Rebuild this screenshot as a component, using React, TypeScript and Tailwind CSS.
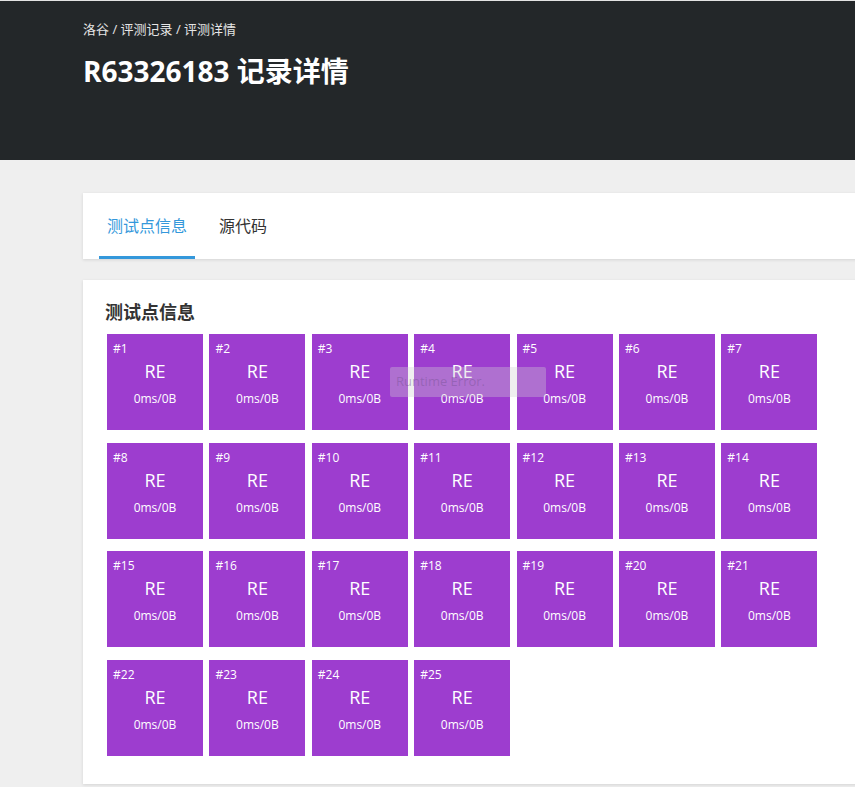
import React from "react";

const FONT = { fontFamily: '"Open Sans", "Noto Sans CJK SC", sans-serif' };

export default function App() {
  const tiles = Array.from({ length: 25 }, (_, i) => i + 1);
  return (
    <div className="w-[855px] h-[787px] overflow-hidden bg-[#efefef]" style={FONT}>
      <div className="h-px bg-[#e3e3e3]" />
      <header className="h-[159px] bg-[#232729] pl-[83px]">
        <div className="pt-[19px] text-[13px] leading-[18px] text-[#e6e6e6]">
          洛谷 / 评测记录 / 评测详情
        </div>
        <h1 className="mt-[19px] text-[28px] leading-[28px] font-bold text-white">
          R63326183 记录详情
        </h1>
      </header>

      <div className="ml-[83px] w-[900px] pt-[33px]">
        <div className="h-[66px] bg-white shadow-[0_1px_3px_rgba(26,26,26,0.12)] flex items-stretch pl-[16px]">
          <div className="relative px-[8px] flex items-center text-[16px] text-[#3498db]">
            <span className="-mt-[1px]">测试点信息</span>
            <div className="absolute left-0 right-0 bottom-0 h-[3px] bg-[#3498db]" />
          </div>
          <div className="ml-[16px] px-[8px] flex items-center text-[16px] text-[#333]">
            <span className="-mt-[1px]">源代码</span>
          </div>
        </div>

        <div className="relative mt-[21px] bg-white shadow-[0_1px_3px_rgba(26,26,26,0.12)] pl-[22px] pt-[20px] pb-[28px]">
          <div className="text-[18px] leading-[24px] font-bold text-[#333]">测试点信息</div>
          <div className="mt-[10px] ml-[2px] w-[760px] flex flex-wrap gap-x-[6.4px] gap-y-[12.67px]">
            {tiles.map((n) => (
              <div key={n} className="relative w-[96px] h-[96px] bg-[#9d3dcf] text-white">
                <div className="absolute left-[6px] top-[6px] text-[12px] leading-[18px]">#{n}</div>
                <div className="absolute left-0 right-0 top-[25px] text-center text-[18px] leading-[24px]">RE</div>
                <div className="absolute left-0 right-0 top-[56px] text-center text-[12px] leading-[18px]">0ms/0B</div>
              </div>
            ))}
          </div>
          <div className="absolute left-[307px] top-[87px] w-[156px] h-[30px] bg-[rgba(210,210,210,0.35)] rounded-[2px] flex items-center pl-[6px] text-[13px] text-[rgba(120,80,150,0.45)]">
            Runtime Error.
          </div>
        </div>
      </div>
    </div>
  );
}
